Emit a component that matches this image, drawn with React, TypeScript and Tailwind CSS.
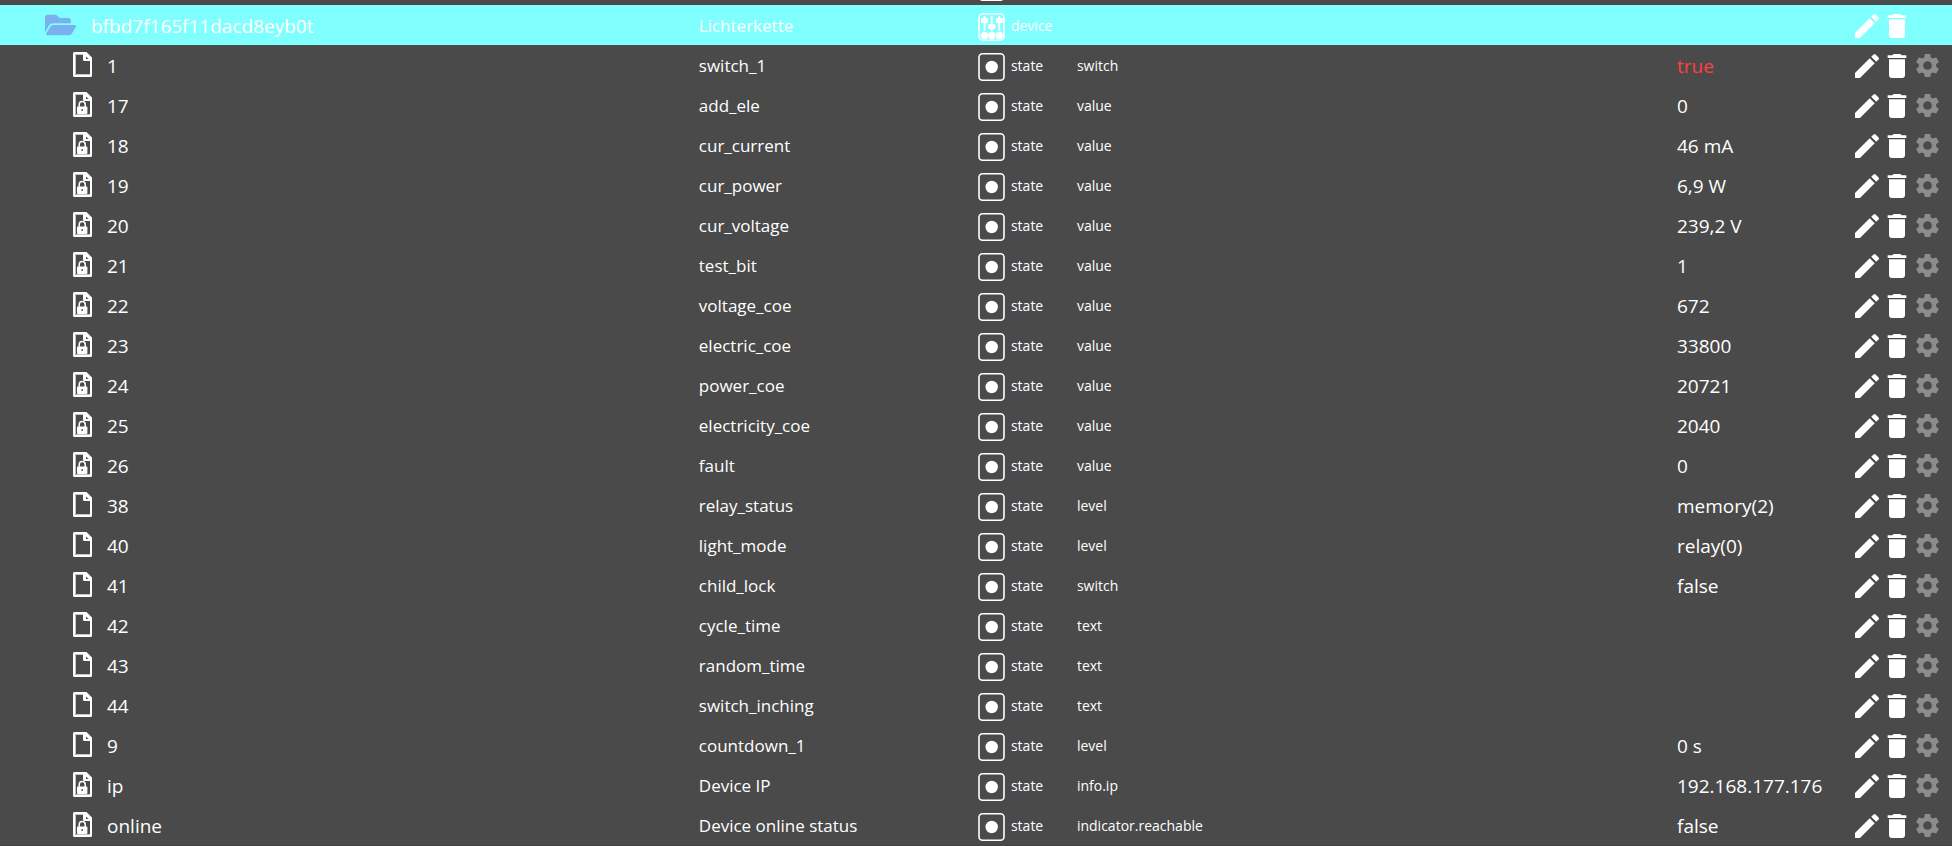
import { FaFolderOpen } from "react-icons/fa";
import { MdDelete, MdEdit, MdSettings } from "react-icons/md";

// Types
type StateRow = {
  id: string;
  name: string;
  role: string;
  value?: string;
  readOnly?: boolean;
  highlight?: boolean;
};

const DEVICE = { id: "bfbd7f165f11dacd8eyb0t", name: "Lichterkette" };

const STATES: StateRow[] = [
  { id: "1", name: "switch_1", role: "switch", value: "true", highlight: true },
  { id: "17", name: "add_ele", role: "value", value: "0", readOnly: true },
  { id: "18", name: "cur_current", role: "value", value: "46 mA", readOnly: true },
  { id: "19", name: "cur_power", role: "value", value: "6,9 W", readOnly: true },
  { id: "20", name: "cur_voltage", role: "value", value: "239,2 V", readOnly: true },
  { id: "21", name: "test_bit", role: "value", value: "1", readOnly: true },
  { id: "22", name: "voltage_coe", role: "value", value: "672", readOnly: true },
  { id: "23", name: "electric_coe", role: "value", value: "33800", readOnly: true },
  { id: "24", name: "power_coe", role: "value", value: "20721", readOnly: true },
  { id: "25", name: "electricity_coe", role: "value", value: "2040", readOnly: true },
  { id: "26", name: "fault", role: "value", value: "0", readOnly: true },
  { id: "38", name: "relay_status", role: "level", value: "memory(2)" },
  { id: "40", name: "light_mode", role: "level", value: "relay(0)" },
  { id: "41", name: "child_lock", role: "switch", value: "false" },
  { id: "42", name: "cycle_time", role: "text" },
  { id: "43", name: "random_time", role: "text" },
  { id: "44", name: "switch_inching", role: "text" },
  { id: "9", name: "countdown_1", role: "level", value: "0 s" },
  { id: "ip", name: "Device IP", role: "info.ip", value: "192.168.177.176", readOnly: true },
  { id: "online", name: "Device online status", role: "indicator.reachable", value: "false", readOnly: true },
];

/**
 * File icon, with a padlock for read only states
 */
function IconFile({ locked }: { locked?: boolean }) {
  return (
    <svg viewBox="0 0 19 25" className="w-[19px] h-[25px] shrink-0" aria-hidden="true">
      <path
        fill="#fff"
        fillRule="evenodd"
        d="M1.5 0H13.5L19 5.5V23.5Q19 25 17.5 25H1.5Q0 25 0 23.5V1.5Q0 0 1.5 0ZM2 2V23H17V9H11.5Q10 9 10 7.5V2Z"
      />
      <path fill="none" stroke="#c4c4c4" d="M10 2.5H2.5V22.5H17" />
      <path fill="#4a4a4a" d="M13 4.5L15.5 7H13Z" />
      {locked && (
        <>
          <path fill="none" stroke="#fff" strokeWidth="1.5" d="M6.2 15V12.6a3 3 0 0 1 6 0V15" />
          <rect x="4" y="14.5" width="10.4" height="7.5" rx="1" fill="#fff" />
          <circle cx="9.2" cy="18" r="0.9" fill="#4a4a4a" />
        </>
      )}
    </svg>
  );
}

function IconState() {
  return (
    <svg viewBox="0 0 27 28" className="w-[27px] h-7 shrink-0" aria-hidden="true">
      <rect x="1" y="0.8" width="25" height="26.4" rx="3.5" fill="none" stroke="#fff" strokeWidth="1.6" />
      <circle cx="13.7" cy="14" r="6.2" fill="#fff" />
    </svg>
  );
}

function IconDevice() {
  return (
    <svg viewBox="0 0 27 28" className="w-[27px] h-7 shrink-0" aria-hidden="true">
      <rect x="1" y="0.8" width="25" height="26.4" rx="4" fill="none" stroke="#fff" strokeWidth="1.6" />
      <g fill="#fff">
        <rect x="5.5" y="3" width="2" height="15" />
        <rect x="3" y="5" width="7" height="5" rx="0.8" />
        <rect x="12.8" y="3" width="2" height="15" />
        <rect x="10.3" y="11" width="7" height="5" rx="0.8" />
        <rect x="20.3" y="3" width="2" height="15" />
        <rect x="17.8" y="5" width="7" height="5" rx="0.8" />
        <circle cx="6.5" cy="22.5" r="3.7" />
        <circle cx="13.8" cy="22.5" r="3.7" />
        <circle cx="21.3" cy="22.5" r="3.7" />
      </g>
    </svg>
  );
}

function RowButtons({ id, settings }: { id: string; settings?: boolean }) {
  return (
    <div className="flex items-center h-10 pt-px">
      <button type="button" aria-label={`Edit ${id}`} className="flex justify-center w-[30px]">
        <MdEdit className="size-8 shrink-0" />
      </button>
      <button type="button" aria-label={`Delete ${id}`} className="flex justify-center w-[30px]">
        <MdDelete className="size-8 shrink-0" />
      </button>
      {settings && (
        <button type="button" aria-label={`Settings ${id}`} className="flex justify-center w-[30px] text-[#8c8c8c]">
          <MdSettings className="size-[29px] shrink-0" />
        </button>
      )}
    </div>
  );
}

export default function App() {
  return (
    <main className="min-h-screen bg-[#4a4a4a] text-white font-['Open_Sans','Noto_Sans',sans-serif] overflow-x-hidden">
      <table className="w-full table-fixed border-collapse text-left whitespace-nowrap">
        <colgroup>
          <col className="w-[35.8%]" />
          <col className="w-[14.3%]" />
          <col className="w-[99px]" />
          <col />
          <col className="w-[175px]" />
          <col className="w-[100px]" />
        </colgroup>
        <tbody>
          {/* Row scrolled out at the top */}
          <tr>
            <td colSpan={2} className="p-0" />
            <td colSpan={4} className="p-0">
              <div className="flex items-end h-[5px] pb-1 overflow-hidden">
                <IconState />
              </div>
            </td>
          </tr>

          {/* Device */}
          <tr className="h-10 bg-[#80ffff]">
            <td className="p-0">
              <div className="flex items-center gap-[15px] h-10 pl-[45px] text-[19px]">
                <FaFolderOpen className="w-[31px] h-7 shrink-0 text-[#78b0f0]" />
                <span className="pt-0.5">{DEVICE.id}</span>
              </div>
            </td>
            <td className="p-0 pt-0.5 text-[17px] leading-6">{DEVICE.name}</td>
            <td className="p-0">
              <div className="flex items-center gap-1.5 h-10 pt-1 text-sm">
                <IconDevice />
                <span className="pb-0.5">device</span>
              </div>
            </td>
            <td className="p-0" />
            <td className="p-0" />
            <td className="p-0">
              <RowButtons id={DEVICE.id} />
            </td>
          </tr>

          {/* States */}
          {STATES.map((state) => (
            <tr key={state.id} className="h-10">
              <td className="p-0">
                <div className="flex items-center gap-[15px] h-10 pl-[73px] text-[19px]">
                  <div className="pb-0.5">
                    <IconFile locked={state.readOnly} />
                  </div>
                  <span className="pt-0.5">{state.id}</span>
                </div>
              </td>
              <td className="p-0 pt-0.5 text-[17px] leading-6">{state.name}</td>
              <td className="p-0">
                <div className="flex items-center gap-1.5 h-10 pt-1 text-sm">
                  <IconState />
                  <span className="pb-0.5">state</span>
                </div>
              </td>
              <td className="p-0 pt-0.5 text-sm">{state.role}</td>
              <td className={state.highlight ? "p-0 pt-0.5 text-[19px] text-[#ff4040]" : "p-0 pt-0.5 text-[19px]"}>
                {state.value}
              </td>
              <td className="p-0">
                <RowButtons id={state.id} settings />
              </td>
            </tr>
          ))}
        </tbody>
      </table>
      <div className="h-px bg-[#424242]" />
    </main>
  );
}
